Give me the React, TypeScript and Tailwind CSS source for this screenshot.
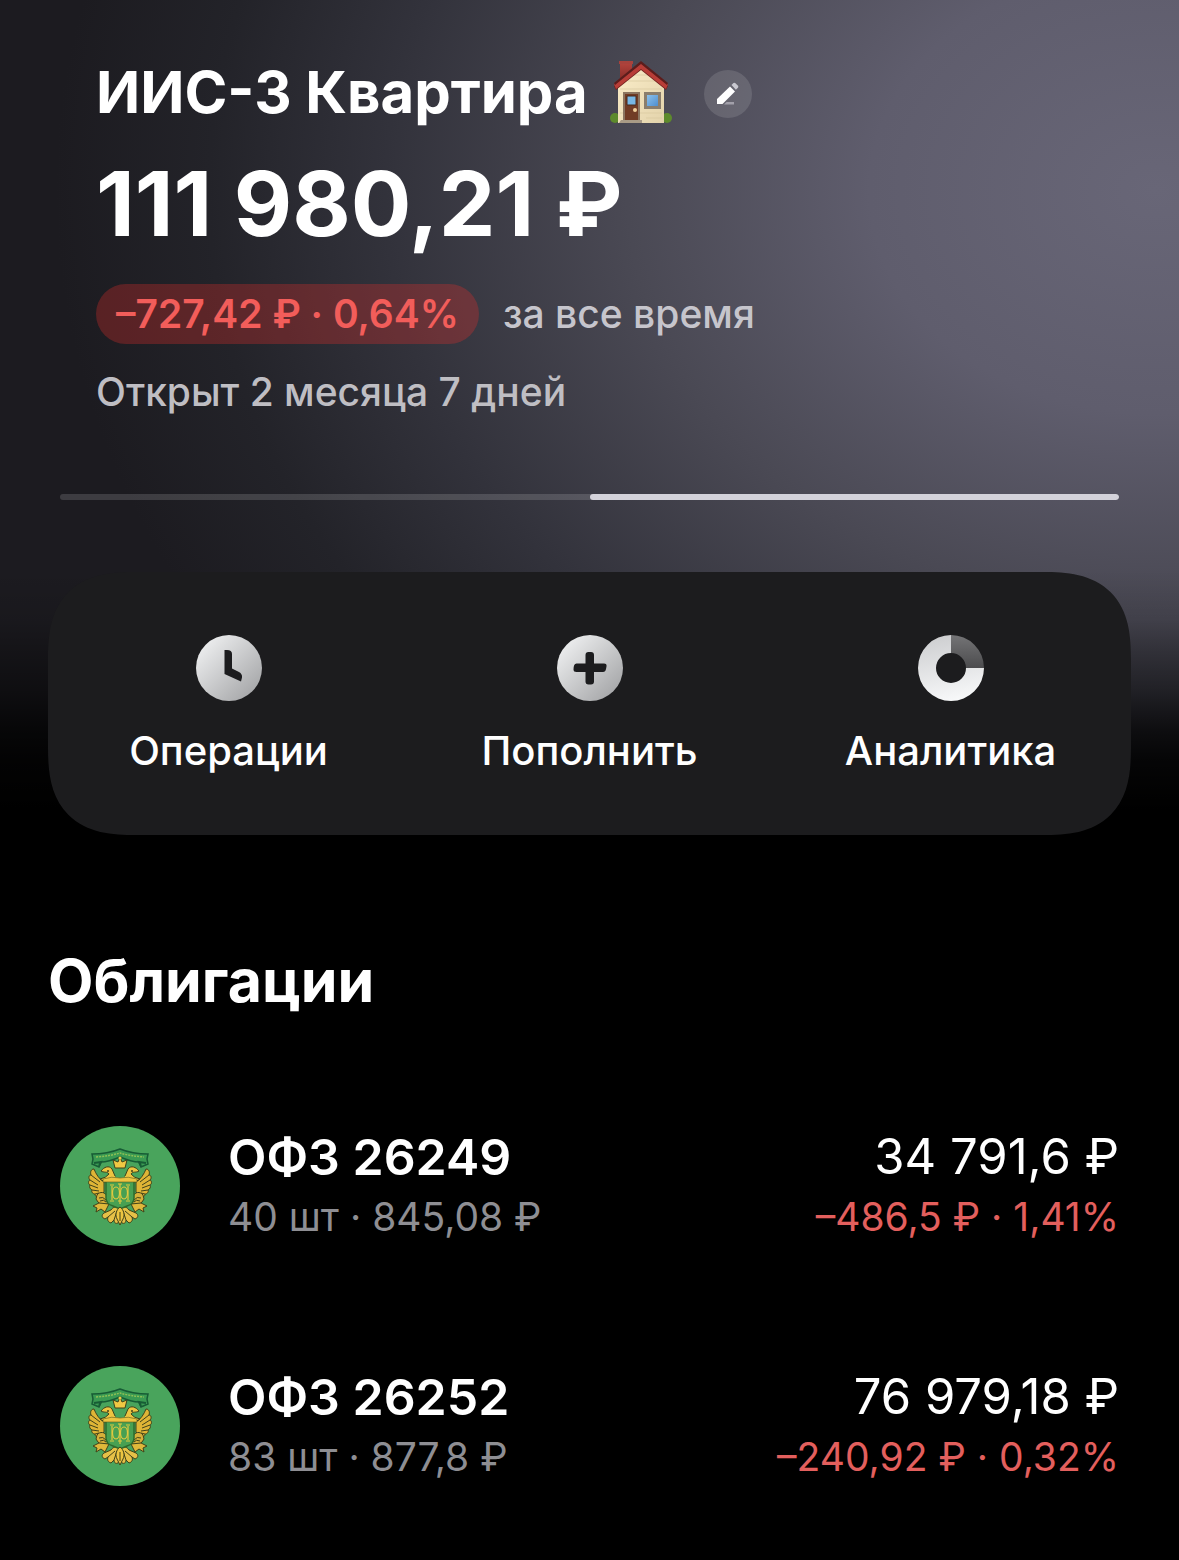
import React from "react";

type Bond = {
  name: string;
  position: string;
  value: string;
  change: string;
};

const bonds: Bond[] = [
  { name: "ОФЗ 26249", position: "40 шт · 845,08 ₽", value: "34 791,6 ₽", change: "–486,5 ₽ · 1,41%" },
  { name: "ОФЗ 26252", position: "83 шт · 877,8 ₽", value: "76 979,18 ₽", change: "–240,92 ₽ · 0,32%" },
];

function HouseIcon() {
  return (
    <svg viewBox="0 0 62 62" className="h-[62px] w-[62px] shrink-0" role="img" aria-label="Дом">
      <defs>
        <linearGradient id="wall" x1="0" y1="0" x2="1" y2="1">
          <stop offset="0" stopColor="#fbedc9" />
          <stop offset="1" stopColor="#e3d3ab" />
        </linearGradient>
        <linearGradient id="glass" x1="0" y1="0" x2="1" y2="1">
          <stop offset="0" stopColor="#8cc0ea" />
          <stop offset="1" stopColor="#4e8fd0" />
        </linearGradient>
        <linearGradient id="chimney" x1="0" y1="0" x2="0" y2="1">
          <stop offset="0" stopColor="#b8463f" />
          <stop offset="1" stopColor="#7e2723" />
        </linearGradient>
      </defs>
      <path d="M10 0h12v13L10 22z" fill="url(#chimney)" />
      <path d="M9 0h14v3H9z" fill="#a8423c" />
      <circle cx="5" cy="57" r="5" fill="#5d8a2c" />
      <circle cx="57" cy="57" r="5" fill="#5d8a2c" />
      <path d="M8 25 31 6l23 19v37H8z" fill="url(#wall)" />
      <path d="M10 28h42M10 52h42M36 57h16M18 20h27M24 14h14" stroke="#d9c9a0" strokeWidth="1" opacity=".7" />
      <path d="m4 25 27-22 27 22-2 4L31 9 6 29z" fill="#6f1f1d" />
      <path d="M31 1 4 23l2 5L31 8l25 20 2-5z" fill="#b83d37" />
      <path d="M31 0 4 22l1 2L31 3l26 21 1-2z" fill="#5c1d1c" />
      <path d="M13 31h17v29H13z" fill="#8b7560" />
      <path d="M15 33h13v27H15z" fill="#713c25" />
      <path d="M17 35h9v9h-9z" fill="#78b7e4" stroke="#4a2a1c" strokeWidth="1" />
      <circle cx="25" cy="49" r="2" fill="#f1d09a" />
      <path d="M11 59h21v3H9z" fill="#a99b86" />
      <path d="M34 31h17v17H34z" fill="#8a7e6d" />
      <path d="M37 34h11v11H37z" fill="url(#glass)" />
    </svg>
  );
}

function PencilIcon() {
  return (
    <svg viewBox="0 0 48 48" className="h-12 w-12" aria-hidden="true">
      <path d="m13 29 13-12.500 5 5L18.500 34H13z" fill="#fff" />
      <path d="m27.500 15 2-2q1-.8 2 .2l2.500 2.600q.8 1-.1 2l-2 2z" fill="#c9c8d0" />
      <path d="M20 34.500 22.500 32H30v2.500z" fill="#a2a0aa" />
    </svg>
  );
}

function ClockIcon() {
  return (
    <svg viewBox="0 0 66 66" className="h-[66px] w-[66px]" aria-hidden="true">
      <defs>
        <linearGradient id="clockFill" x1="0.1" y1="0.1" x2="0.9" y2="0.9">
          <stop offset="0" stopColor="#eeeff0" />
          <stop offset="1" stopColor="#a5a6a8" />
        </linearGradient>
      </defs>
      <circle cx="33" cy="33" r="33" fill="url(#clockFill)" />
      <path d="M28.500 15H31q5 0 5 4V33.500l7 3.500q3.500 2 3 5.500l-1 4L28.500 39z" fill="#1c1c1e" />
    </svg>
  );
}

function PlusIcon() {
  return (
    <svg viewBox="0 0 66 66" className="h-[66px] w-[66px]" aria-hidden="true">
      <defs>
        <linearGradient id="plusFill" x1="0.1" y1="0.1" x2="0.9" y2="0.9">
          <stop offset="0" stopColor="#eeeff0" />
          <stop offset="1" stopColor="#a5a6a8" />
        </linearGradient>
      </defs>
      <circle cx="33" cy="33" r="33" fill="url(#plusFill)" />
      <path
        d="M31.500 17H34q3 0 3 3v8.500h10q3 0 2.500 3L49 34q-.5 3-3 3h-9v9.500q0 3-3 3h-2.500q-3 0-3-3V37h-9q-3 0-3-2.500 0-6 3-6h9V20q0-3 3-3z"
        fill="#1c1c1e"
      />
    </svg>
  );
}

function DonutIcon() {
  return (
    <svg viewBox="0 0 66 66" className="h-[66px] w-[66px]" aria-hidden="true">
      <defs>
        <linearGradient id="ring" x1="0.3" y1="0" x2="0.5" y2="1">
          <stop offset="0" stopColor="#cdced0" />
          <stop offset="1" stopColor="#f7f8f9" />
        </linearGradient>
        <linearGradient id="slice" x1="0" y1="0" x2="0" y2="1">
          <stop offset="0" stopColor="#747476" />
          <stop offset="1" stopColor="#4c4c4e" />
        </linearGradient>
      </defs>
      <path d="M33 0a33 33 0 1 0 33 33H48a15 15 0 1 1-15-15z" fill="url(#ring)" />
      <path d="M33 0a33 33 0 0 1 33 33H48a15 15 0 0 0-15-15z" fill="url(#slice)" />
    </svg>
  );
}

function EmblemWing() {
  return (
    <g>
      <path
        d="M44 56c-5-3-8-8-10-13-3 0-4 3-3 6-2 0-3 3-1 5-2 1-2 4 0 5-1 2 0 4 2 5-1 2 1 4 3 4 0 2 2 4 4 3l5-5z"
        fill="#dfb536"
        stroke="#40421a"
        strokeWidth="1"
      />
      <path d="m31 49 9 7m-10-2 8 5m-8 0 8 3m-6 2 7 1m-4 3 4-1" stroke="#40421a" strokeWidth="1" fill="none" />
      <path d="M40 53q6-1 9-5c-2-3-5-1-8-3 3-4 8-6 11-2l3 7 5 2v4H45z" fill="#edc441" stroke="#40421a" strokeWidth="1" />
      <circle cx="48" cy="45" r="1" fill="#40421a" />
      <path d="M37 69c3-4 8-3 10 1l1 7c-3 3-7 2-10-1l-2-3z" fill="#d7b039" stroke="#40421a" strokeWidth="1" />
      <path d="m39 77-6 3 4 2-1 4 5-3 4 3 4-8z" fill="#e0b83a" stroke="#40421a" strokeWidth="1" />
      <path d="M39 72q4-2 7 2m-6 1q4-2 6 1" stroke="#40421a" strokeWidth="1" fill="none" />
      <path
        d="M60 82c-4-2-7-1-9 2l-7 3c-3 2-2 5 1 6l3-2c-1 3 0 5 3 6l3-3c0 3 2 4 4 3l2-4z"
        fill="#e6c047"
        stroke="#40421a"
        strokeWidth="1"
      />
      <path d="m48 91 7-6m-1 9 3-9" stroke="#40421a" strokeWidth="1" />
    </g>
  );
}

function Emblem() {
  return (
    <svg viewBox="0 0 120 120" className="h-[120px] w-[120px] shrink-0" aria-hidden="true">
      <circle cx="60" cy="60" r="60" fill="#49a45c" />
      <path
        d="M32 28c8 0 18-1 28-5 10 4 20 5 28 5l-1 5 1 5-7 3-2-5c-6 0-12-2-19-5-7 3-13 5-19 5l-2 5-7-3 1-5z"
        fill="#3a9a52"
        stroke="#175c35"
        strokeWidth="1.500"
      />
      <path d="M36 31q14-1 24-4 10 3 24 4" fill="none" stroke="#8cbf55" strokeWidth="1.500" strokeDasharray="2 1" />
      <path d="m34 37 7-1-2 4m47-3-7-1 2 4" fill="none" stroke="#175c35" strokeWidth="2" />
      <EmblemWing />
      <g transform="matrix(-1 0 0 1 120 0)">
        <EmblemWing />
      </g>
      <path d="m55 42-2-8 5 2 2-5 2 5 5-2-2 8z" fill="#f0c843" stroke="#40421a" strokeWidth="1" />
      <circle cx="60" cy="32" r="1.500" fill="#f0c843" />
      <path d="M57 45h6l2 7H55z" fill="#49a45c" />
      <path d="M46 54h28v18q0 6-7 8l-7 3-7-3q-7-2-7-8z" fill="#48a052" stroke="#2e6b2c" strokeWidth="1.500" />
      <path d="M43 53q9-3 17-1 8-2 17 1v3H43z" fill="#edc441" stroke="#5e5a1c" strokeWidth=".6" />
      <g fill="none" stroke="#e2c93f" strokeWidth="1.200">
        <path d="M52 60v14m16-14v14M50 59h4m12 0h4M50 75h4m12 0h4" />
        <ellipse cx="56" cy="67" rx="3.500" ry="6" />
        <ellipse cx="64" cy="67" rx="3.500" ry="6" />
        <path d="M60 58v20m-2-20h4m-4 17h4" />
      </g>
      <path d="M60 81c-4 3-5 8-3 12l3 6 3-6c2-4 1-9-3-12z" fill="#edc441" stroke="#40421a" strokeWidth="1" />
      <path d="M60 86v9" stroke="#40421a" strokeWidth="1" />
    </svg>
  );
}

const actions = [
  { label: "Операции", Icon: ClockIcon },
  { label: "Пополнить", Icon: PlusIcon },
  { label: "Аналитика", Icon: DonutIcon },
];

export default function App() {
  return (
    <main className="min-h-screen bg-black pb-[72px] font-['Inter','Liberation_Sans',sans-serif] text-white">
      <section className="bg-[linear-gradient(to_bottom,transparent_0,transparent_570px,rgba(0,0,0,0.1)_620px,rgba(0,0,0,0.27)_650px,rgba(0,0,0,0.48)_690px,rgba(0,0,0,0.76)_730px,rgba(0,0,0,0.9)_760px,#000_810px),radial-gradient(1100px_860px_at_98%_190px,#686677_0%,#5f5d6d_26%,#4a4954_48%,#32323b_70%,#232329_86%,#1c1b20_100%)] px-12 pt-[54px]">
        <header className="px-12">
          <div className="flex h-[76px] items-center">
            <h1 className="text-[58px] leading-[76px] font-bold">ИИС-3 Квартира</h1>
            <span className="ml-[22px]">
              <HouseIcon />
            </span>
            <button
              type="button"
              aria-label="Переименовать счёт"
              className="mt-1 ml-8 flex h-12 w-12 items-center justify-center rounded-full bg-white/12"
            >
              <PencilIcon />
            </button>
          </div>
          <p className="mt-5 text-[90px] leading-[108px] font-bold">111 980,21 ₽</p>
          <div className="mt-[26px] flex items-center gap-6">
            <span className="flex h-[60px] items-center rounded-full bg-[#e62e2c]/30 px-5 text-[39px] leading-[48px] font-semibold text-[#f25d5a]">
              –727,42 ₽ · 0,64%
            </span>
            <span className="text-[39px] leading-[48px] font-medium text-[#c6c5cc]">за все время</span>
          </div>
          <p className="mt-6 text-[39px] leading-[48px] font-medium text-[#bfbec3]">Открыт 2 месяца 7 дней</p>
        </header>

        <div className="mx-3 mt-[78px] flex h-1.5 overflow-hidden rounded-full bg-white/15">
          <span className="ml-auto h-1.5 w-1/2 rounded-full bg-[#d3d2da]" />
        </div>

        <nav className="mt-[72px] grid grid-cols-3 rounded-[88px] bg-[#1c1c1e] [corner-shape:superellipse(1.4)]">
          {actions.map(({ label, Icon }) => (
            <button
              key={label}
              type="button"
              className="flex flex-col items-center gap-[26px] pt-[63px] pb-[60px] text-[40px] leading-[48px] font-medium"
            >
              <Icon />
              {label}
            </button>
          ))}
        </nav>
      </section>

      <section className="px-12 pt-[110px]">
        <h2 className="text-[59px] leading-[72px] font-bold">Облигации</h2>
        <ul className="mx-3 mt-[109px] flex flex-col gap-[120px]">
          {bonds.map((bond) => (
            <li key={bond.name} className="flex h-[120px] items-center">
              <Emblem />
              <div className="ml-12 flex-1 pt-[2px]">
                <h3 className="text-[50px] leading-[60px] font-semibold">{bond.name}</h3>
                <p className="text-[39px] leading-[60px] text-[#8e8e93]">{bond.position}</p>
              </div>
              <div className="pt-[2px] text-right">
                <p className="text-[49px] leading-[60px]">{bond.value}</p>
                <p className="text-[39px] leading-[60px] text-[#e35f5d]">{bond.change}</p>
              </div>
            </li>
          ))}
        </ul>
      </section>
    </main>
  );
}
